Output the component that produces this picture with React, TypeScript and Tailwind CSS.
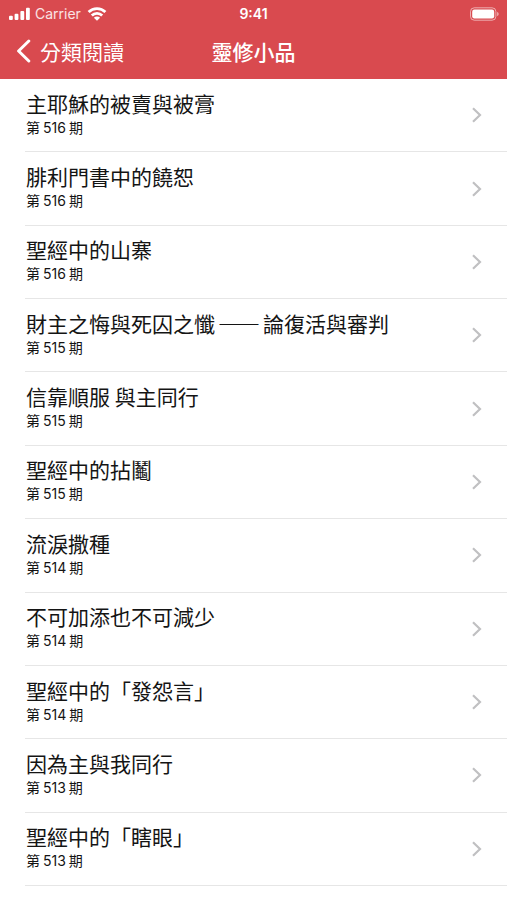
type Article = { title: string; issue: number };

const articles: Article[] = [
  { title: '主耶穌的被賣與被膏', issue: 516 },
  { title: '腓利門書中的饒恕', issue: 516 },
  { title: '聖經中的山寨', issue: 516 },
  { title: '財主之悔與死囚之懺——論復活與審判', issue: 515 },
  { title: '信靠順服 與主同行', issue: 515 },
  { title: '聖經中的拈鬮', issue: 515 },
  { title: '流淚撒種', issue: 514 },
  { title: '不可加添也不可減少', issue: 514 },
  { title: '聖經中的「發怨言」', issue: 514 },
  { title: '因為主與我同行', issue: 513 },
  { title: '聖經中的「瞎眼」', issue: 513 },
];

function StatusBar() {
  return (
    <div className="grid h-[27px] grid-cols-3 items-center px-2 font-['Inter',sans-serif] text-[14px] leading-5">
      <div className="flex items-center gap-1">
        <svg width="23" height="14" viewBox="0 0 23 14" fill="currentColor" aria-hidden="true">
          <rect x="1" y="8.8" width="3.8" height="4.2" rx="1" />
          <rect x="6.6" y="6.8" width="3.8" height="6.2" rx="1" />
          <rect x="12.4" y="4" width="3.8" height="9" rx="1" />
          <rect x="18" y="0.8" width="3.8" height="12.2" rx="1" />
        </svg>
        <span className="text-white/85">Carrier</span>
        <svg className="ml-[2px]" width="20" height="14" viewBox="0 0 20 14" fill="none" stroke="currentColor" strokeWidth="2.8" aria-hidden="true">
          <path d="M1.6 5a12 12 0 0 1 16.8 0" />
          <path d="M4.8 8.5a7.4 7.4 0 0 1 10.4 0" />
          <path d="M10 13.8 6.9 10.8a4.4 4.4 0 0 1 6.2 0Z" fill="currentColor" stroke="none" />
        </svg>
      </div>
      <time className="text-center font-semibold">9:41</time>
      <svg className="justify-self-end" width="30" height="14" viewBox="0 0 30 14" aria-hidden="true">
        <rect x="1.5" y="0.8" width="25.4" height="12.4" rx="3.8" fill="none" stroke="white" strokeOpacity="0.55" />
        <rect x="3.2" y="2.5" width="22" height="9" rx="2.2" fill="white" />
        <path d="M28.2 5v4c.9-.4 1.4-1.1 1.4-2s-.5-1.6-1.4-2Z" fill="white" fillOpacity="0.6" />
      </svg>
    </div>
  );
}

function NavBar() {
  return (
    <div className="grid h-[52px] grid-cols-[1fr_auto_1fr] items-center px-4 pb-1 text-[21px] leading-7">
      <button type="button" className="flex items-center gap-2 justify-self-start">
        <svg width="16" height="24" viewBox="0 0 16 24" fill="none" stroke="currentColor" strokeWidth="3" strokeLinecap="round" strokeLinejoin="round" aria-hidden="true">
          <path d="M12.8 2 2.6 12l10.2 10" />
        </svg>
        <span>分類閱讀</span>
      </button>
      <h1 className="font-medium">靈修小品</h1>
    </div>
  );
}

function ArticleRow({ title, issue }: Article) {
  return (
    <li className="flex flex-1 border-b border-[#e6e6e6]">
      <a href="#" className="flex flex-1 items-center justify-between pr-6 pl-px">
        <div className="pb-1">
          <h2 className="text-[21px] leading-7">
            {title.split('——').map((part, i) => (
              <span key={part}>
                {i > 0 && <span className="mx-[3px]">——</span>}
                {part}
              </span>
            ))}
          </h2>
          <p className="text-[14px] leading-5">
            第<span className="mx-[3px] font-['Inter',sans-serif]">{issue}</span>期
          </p>
        </div>
        <svg width="12" height="16" viewBox="0 0 12 16" fill="none" stroke="#c0c0c2" strokeWidth="2.2" aria-hidden="true">
          <path d="M2 1.2 9 8l-7 6.8" />
        </svg>
      </a>
    </li>
  );
}

export default function App() {
  return (
    <div lang="zh-Hant" className="flex min-h-screen flex-col bg-white font-['Noto_Sans_CJK_TC',sans-serif] text-[#141414]">
      <header className="bg-[#d94a4f] text-white">
        <StatusBar />
        <NavBar />
      </header>
      <ul className="flex flex-1 flex-col pb-[14px] pl-[25px]">
        {articles.map((article) => (
          <ArticleRow key={article.title} {...article} />
        ))}
      </ul>
    </div>
  );
}
